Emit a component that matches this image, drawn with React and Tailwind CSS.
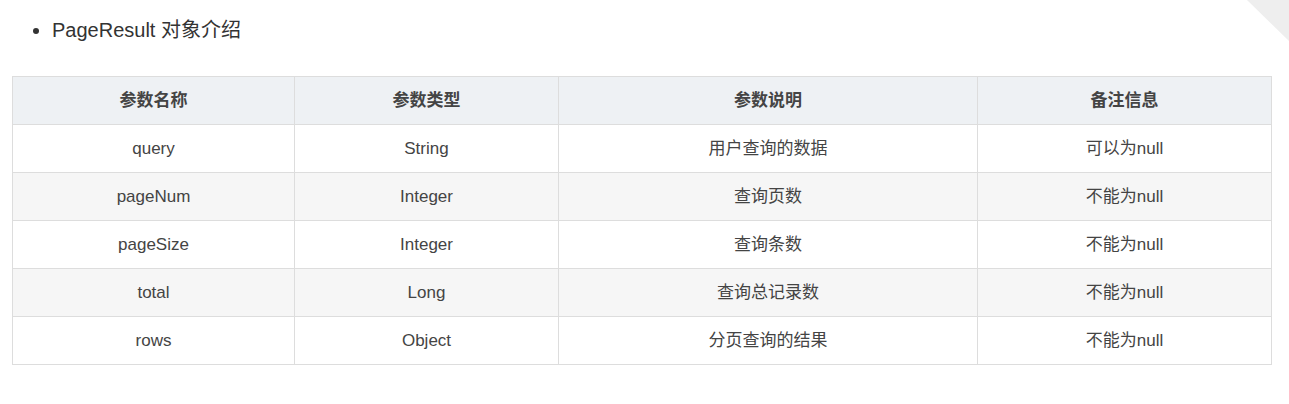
import React from "react";

const rows = [
  { name: "query", type: "String", desc: "用户查询的数据", note: "可以为null" },
  { name: "pageNum", type: "Integer", desc: "查询页数", note: "不能为null" },
  { name: "pageSize", type: "Integer", desc: "查询条数", note: "不能为null" },
  { name: "total", type: "Long", desc: "查询总记录数", note: "不能为null" },
  { name: "rows", type: "Object", desc: "分页查询的结果", note: "不能为null" },
];

const App = () => {
  return (
    <div
      className="relative w-[1289px] h-[404px] bg-white overflow-hidden pl-[12px]"
      style={{ fontFamily: '"Liberation Sans", "Noto Sans CJK SC", sans-serif' }}
    >
      {/* corner fold */}
      <svg className="absolute top-0 right-0" width="42" height="41" viewBox="0 0 42 41">
        <polygon points="0,0 42,0 42,41" fill="#eeeeee" />
      </svg>

      <ul className="list-disc pl-[40px] pt-[16px] mb-[32px] text-[20px] leading-[28px] text-[#333]">
        <li>PageResult 对象介绍</li>
      </ul>

      <table className="w-[1260px] border-collapse text-[17px] text-[#444] text-center">
        <thead>
          <tr className="bg-[#eef1f4]">
            <th className="w-[282px] h-[48px] border border-[#dddddd] font-bold">参数名称</th>
            <th className="w-[264px] h-[48px] border border-[#dddddd] font-bold">参数类型</th>
            <th className="w-[419px] h-[48px] border border-[#dddddd] font-bold">参数说明</th>
            <th className="h-[48px] border border-[#dddddd] font-bold">备注信息</th>
          </tr>
        </thead>
        <tbody>
          {rows.map((r, i) => (
            <tr key={r.name} className={i % 2 === 1 ? "bg-[#f6f6f6]" : "bg-white"}>
              <td className="h-[48px] border border-[#dddddd]">{r.name}</td>
              <td className="h-[48px] border border-[#dddddd]">{r.type}</td>
              <td className="h-[48px] border border-[#dddddd]">{r.desc}</td>
              <td className="h-[48px] border border-[#dddddd]">{r.note}</td>
            </tr>
          ))}
        </tbody>
      </table>
    </div>
  );
};

export default App;
